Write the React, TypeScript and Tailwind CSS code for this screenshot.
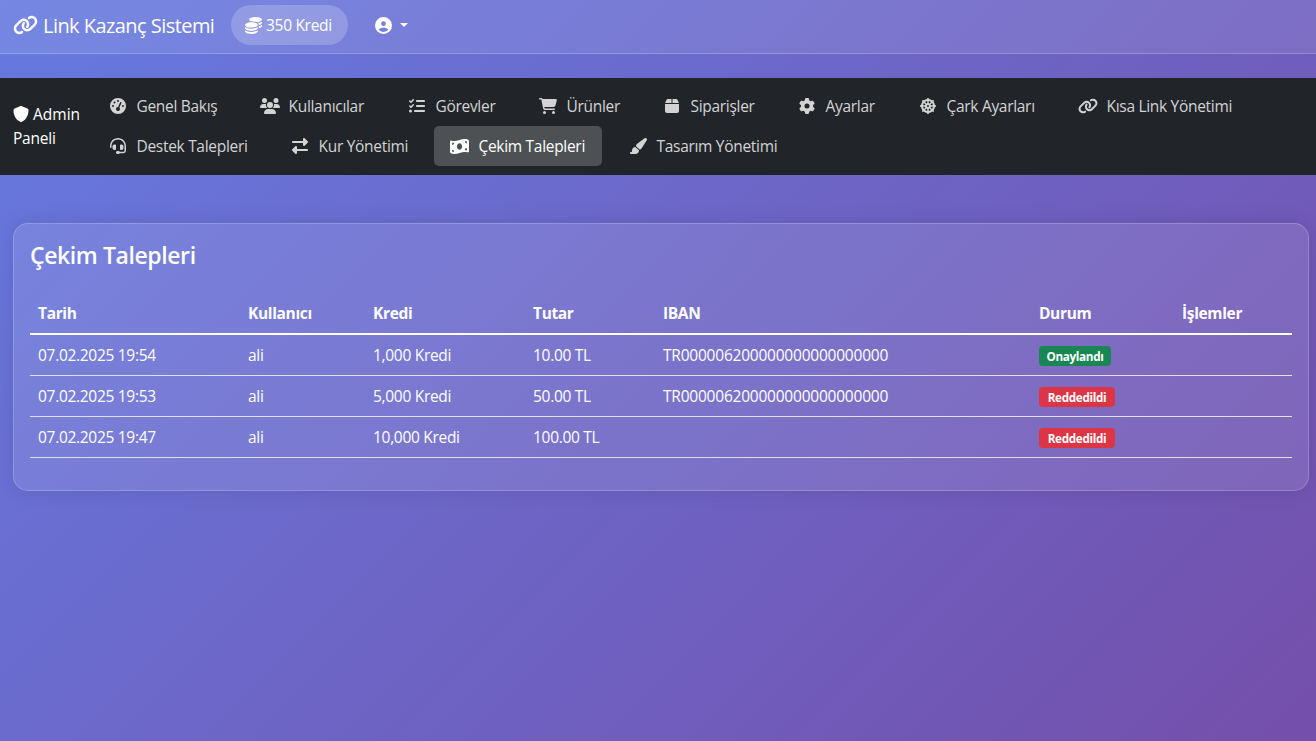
import React from "react";
import type { IconType } from "react-icons";
import {
  FaBox,
  FaCartShopping,
  FaCircleUser,
  FaCoins,
  FaDharmachakra,
  FaGaugeHigh,
  FaGear,
  FaHeadset,
  FaLink,
  FaListCheck,
  FaMoneyBillWave,
  FaPaintbrush,
  FaRightLeft,
  FaShield,
  FaUsers,
} from "react-icons/fa6";

type NavEntry = { label: string; icon: IconType; width: string; size?: string; active?: boolean };

const navRows: NavEntry[][] = [
  [
    { label: "Genel Bakış", icon: FaGaugeHigh, width: "w-[152px]" },
    { label: "Kullanıcılar", icon: FaUsers, width: "w-[147px]", size: "w-5 h-4" },
    { label: "Görevler", icon: FaListCheck, width: "w-[131px]" },
    { label: "Ürünler", icon: FaCartShopping, width: "w-[124px]", size: "w-[18px] h-4" },
    { label: "Siparişler", icon: FaBox, width: "w-[135px]" },
    { label: "Ayarlar", icon: FaGear, width: "w-[121px]" },
    { label: "Çark Ayarları", icon: FaDharmachakra, width: "w-[160px]" },
    { label: "Kısa Link Yönetimi", icon: FaLink, width: "w-[198px]", size: "w-5 h-4" },
  ],
  [
    { label: "Destek Talepleri", icon: FaHeadset, width: "w-[182px]" },
    { label: "Kur Yönetimi", icon: FaRightLeft, width: "w-[160px]" },
    { label: "Çekim Talepleri", icon: FaMoneyBillWave, width: "w-[178px]", size: "w-[19px] h-[17px]", active: true },
    { label: "Tasarım Yönetimi", icon: FaPaintbrush, width: "w-[190px]", size: "w-[18px] h-4" },
  ],
];

const requests = [
  { date: "07.02.2025 19:54", user: "ali", credit: "1,000 Kredi", amount: "10.00 TL", iban: "TR000006200000000000000000", approved: true },
  { date: "07.02.2025 19:53", user: "ali", credit: "5,000 Kredi", amount: "50.00 TL", iban: "TR000006200000000000000000", approved: false },
  { date: "07.02.2025 19:47", user: "ali", credit: "10,000 Kredi", amount: "100.00 TL", iban: "", approved: false },
];

const NavItem = ({ item }: { item: NavEntry }) => (
  <li className={`${item.width} shrink-0 pr-[10px]`}>
    <a
      href="#"
      className={`flex h-10 items-center rounded-[5px] pl-4 whitespace-nowrap ${
        item.active ? "bg-[#4d5154] text-white" : "text-[#d3d3d4]"
      }`}
    >
      <span className="mr-[9px] flex w-5 shrink-0 justify-center">
        <item.icon className={`shrink-0 ${item.size ?? "size-4"}`} />
      </span>
      <span className="pt-[2px]">{item.label}</span>
    </a>
  </li>
);

const StatusBadge = ({ approved }: { approved: boolean }) => (
  <span
    className={`block h-5 rounded-[4px] text-center text-[11.7px] leading-[21px] font-bold tracking-[-0.33px] ${
      approved ? "w-18 bg-[#198754]" : "w-19 bg-[#dc3545]"
    }`}
  >
    {approved ? "Onaylandı" : "Reddedildi"}
  </span>
);

const App = () => {
  return (
    <div className="h-[741px] w-[1316px] overflow-hidden bg-[linear-gradient(135deg,#667ae0_0%,#744fab_100%)] font-['Open_Sans','Noto_Sans',sans-serif] text-[15.5px] text-white">
      {/* Site header */}
      <header className="flex h-[54px] items-center border-b border-white/20 bg-white/10 pb-[3px] pl-[13px]">
        <a href="#" className="flex w-[218px] items-center gap-[5px] text-[20px] tracking-[-0.55px] whitespace-nowrap">
          <FaLink className="h-5 w-[25px] shrink-0" />
          <span className="pt-[2px]">Link Kazanç Sistemi</span>
        </a>
        <div className="flex h-10 w-[117px] items-center rounded-full bg-white/20 pl-[14px] tracking-[-0.3px] whitespace-nowrap">
          <FaCoins className="mr-1 size-[17px]" />
          <span className="pt-[2px]">350 Kredi</span>
        </div>
        <button className="ml-[27px] flex items-center">
          <FaCircleUser className="size-[17px]" />
          <span className="ml-2 border-x-4 border-t-4 border-x-transparent border-t-white" />
        </button>
      </header>

      {/* Admin navigation */}
      <nav className="mt-6 flex h-[97px] bg-[#212529] pt-2">
        <div className="w-[91.5px] pt-4 pl-[13px] leading-6">
          <div className="flex items-center gap-1">
            <FaShield className="size-4" />
            Admin
          </div>
          <div className="tracking-[-0.2px]">Paneli</div>
        </div>
        <div className="tracking-[-0.3px]">
          {navRows.map((row, index) => (
            <ul key={index} className="flex">
              {row.map((item) => (
                <NavItem key={item.label} item={item} />
              ))}
            </ul>
          ))}
        </div>
      </nav>

      <main className="mt-12 pr-[7px] pl-[13px]">
        <section className="h-[268px] rounded-[15px] border border-white/20 bg-white/10 px-4 pt-4 shadow-[0_0_20px_rgba(0,0,0,0.1)]">
          <h1 className="mb-[22px] h-[30px] text-[23px] leading-[30px] font-semibold tracking-[-0.4px]">Çekim Talepleri</h1>
          <table className="w-[1262px] table-fixed border-collapse">
            <colgroup>
              <col className="w-[210px]" />
              <col className="w-[125px]" />
              <col className="w-[160px]" />
              <col className="w-[130px]" />
              <col className="w-[376px]" />
              <col className="w-[143px]" />
              <col className="w-[118px]" />
            </colgroup>
            <thead>
              <tr className="h-[42px] border-b-2 border-white text-left font-bold tracking-[-0.35px]">
                <th className="px-2 pt-[3px]">Tarih</th>
                <th className="px-2 pt-[3px]">Kullanıcı</th>
                <th className="px-2 pt-[3px]">Kredi</th>
                <th className="px-2 pt-[3px]">Tutar</th>
                <th className="px-2 pt-[3px]">IBAN</th>
                <th className="px-2 pt-[3px]">Durum</th>
                <th className="px-2 pt-[3px]">İşlemler</th>
              </tr>
            </thead>
            <tbody>
              {requests.map((request) => (
                <tr key={request.date} className="h-[41px] border-b border-[#dee2e6] tracking-[-0.3px]">
                  <td className="px-2 pt-[2px]">{request.date}</td>
                  <td className="px-2 pt-[2px]">{request.user}</td>
                  <td className="px-2 pt-[2px]">{request.credit}</td>
                  <td className="px-2 pt-[2px]">{request.amount}</td>
                  <td className="px-2 pt-[2px] tracking-[-0.22px]">{request.iban}</td>
                  <td className="px-2 pt-[2px]">
                    <StatusBadge approved={request.approved} />
                  </td>
                  <td className="px-2" />
                </tr>
              ))}
            </tbody>
          </table>
        </section>
      </main>
    </div>
  );
};

export default App;
